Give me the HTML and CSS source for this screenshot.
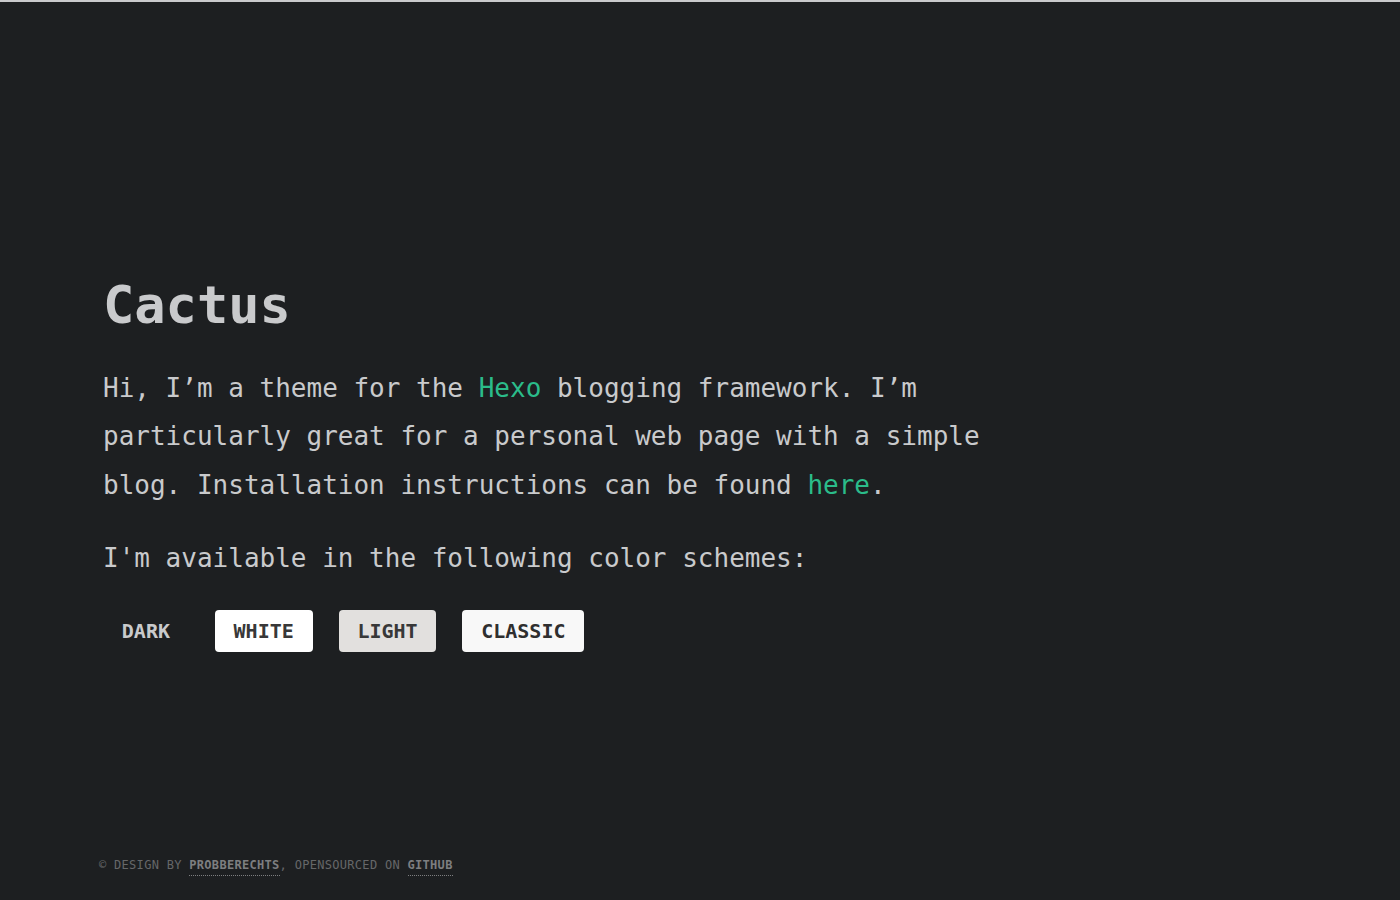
FILE: index.html
```html
<!DOCTYPE html>
<html lang="en">
<head>
<meta charset="utf-8">
<title>Cactus</title>
<link rel="stylesheet" href="styles.css">
</head>
<body>
<main class="content">
  <h1 class="title">Cactus</h1>
  <p class="intro">Hi, I’m a theme for the <a class="link" href="#">Hexo</a> blogging framework. I’m particularly great for a personal web page with a simple blog. Installation instructions can be found <a class="link" href="#">here</a>.</p>
  <p class="schemes-label">I'm available in the following color schemes:</p>
  <div class="schemes">
    <a class="scheme scheme-dark" href="#">DARK</a>
    <a class="scheme scheme-white" href="#">WHITE</a>
    <a class="scheme scheme-light" href="#">LIGHT</a>
    <a class="scheme scheme-classic" href="#">CLASSIC</a>
  </div>
</main>
<footer class="footer">© DESIGN BY <a class="footer-link" href="#">PROBBERECHTS</a>, OPENSOURCED ON <a class="footer-link" href="#">GITHUB</a></footer>
</body>
</html>
```
FILE: styles.css
```css
html, body {
  margin: 0;
  padding: 0;
}
body {
  background: #1d1f21;
  color: #c9cacc;
  font-family: "DejaVu Sans Mono", "Liberation Mono", monospace;
  border-top: 2px solid #c9cacc;
  height: 898px;
  display: flex;
  flex-direction: column;
  overflow: hidden;
}
.content {
  padding: 273px 0 0 103px;
  width: 900px;
}
.title {
  margin: 0;
  font-size: 52px;
  line-height: 60px;
  font-weight: bold;
  color: #c9cacc;
}
.intro {
  margin: 28.7px 0 0 0;
  font-size: 26px;
  line-height: 48.5px;
}
.schemes-label {
  margin: 24.5px 0 0 0;
  font-size: 26px;
  line-height: 48.5px;
}
.link {
  color: #2bbc8a;
  text-decoration: none;
}
.schemes {
  display: flex;
  gap: 26px;
  margin-top: 27.75px;
}
.scheme {
  display: block;
  height: 42px;
  line-height: 42px;
  padding: 0 18.8px;
  font-size: 20px;
  font-weight: bold;
  text-decoration: none;
  border-radius: 4px;
  color: #383838;
}
.scheme-dark {
  color: #c9cacc;
}
.scheme-white {
  background: #ffffff;
}
.scheme-light {
  background: #e2e0de;
}
.scheme-classic {
  background: #f8f8f8;
  color: #2f2f2f;
}
.footer {
  margin-top: auto;
  padding: 0 0 25px 99px;
  font-size: 12px;
  line-height: 20px;
  letter-spacing: 0.3px;
  color: #666769;
}
.footer-link {
  color: #7d7e80;
  font-weight: bold;
  text-decoration: none;
  padding-bottom: 3px;
  border-bottom: 1px dotted #7d7e80;
}
```
